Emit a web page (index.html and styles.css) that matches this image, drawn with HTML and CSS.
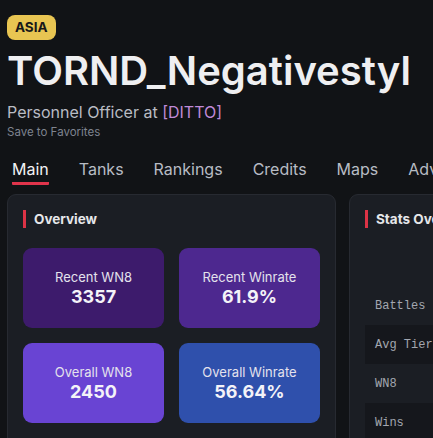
FILE: index.html
```html
<!DOCTYPE html>
<html>
<head>
    <title>TORND_Negativestyl - Player Stats</title>
    <link rel="stylesheet" href="styles.css">
</head>
<body>
    <div class="page">
        <div class="player-head">
            <span class="region">ASIA</span>
            <h1 class="player-name">TORND_Negativestyl</h1>
            <div class="clan-line">Personnel Officer at <a class="clan-tag" href="#">[DITTO]</a></div>
            <a class="fav-link" href="#">Save to Favorites</a>
        </div>

        <nav class="tabs">
            <a class="tab active" href="#">Main</a>
            <a class="tab" href="#">Tanks</a>
            <a class="tab" href="#">Rankings</a>
            <a class="tab" href="#">Credits</a>
            <a class="tab" href="#">Maps</a>
            <a class="tab" href="#">Advanced</a>
        </nav>

        <div class="panels">
            <section class="card">
                <h2 class="card-title">Overview</h2>
                <div class="tiles">
                    <div class="tile tile-recent-wn8">
                        <span class="tile-label">Recent WN8</span>
                        <span class="tile-value">3357</span>
                    </div>
                    <div class="tile tile-recent-wr">
                        <span class="tile-label">Recent Winrate</span>
                        <span class="tile-value">61.9%</span>
                    </div>
                    <div class="tile tile-overall-wn8">
                        <span class="tile-label">Overall WN8</span>
                        <span class="tile-value">2450</span>
                    </div>
                    <div class="tile tile-overall-wr">
                        <span class="tile-label">Overall Winrate</span>
                        <span class="tile-value">56.64%</span>
                    </div>
                </div>
            </section>

            <section class="card">
                <h2 class="card-title">Stats Overview</h2>
                <table class="stats-table">
                    <thead>
                        <tr><th></th><th>Overall</th><th>Recent</th></tr>
                    </thead>
                    <tbody>
                        <tr><td>Battles</td><td>24,118</td><td>1,204</td></tr>
                        <tr><td>Avg Tier</td><td>8.21</td><td>9.34</td></tr>
                        <tr><td>WN8</td><td>2450</td><td>3357</td></tr>
                        <tr><td>Wins</td><td>56.64%</td><td>61.9%</td></tr>
                    </tbody>
                </table>
            </section>
        </div>
    </div>
</body>
</html>
```

FILE: styles.css
```css
html, body { margin: 0; padding: 0; background: #111316; overflow: hidden; }
body { font-family: Inter, "Noto Sans", sans-serif; color: #ececee; }
a { text-decoration: none; }

.page { padding: 15px 7px 0 7px; width: 700px; }

.region { display: inline-block; background: #e8c552; color: #16171a; font-size: 13.5px; font-weight: 700; line-height: 25px; padding: 0 8px; border-radius: 8px; }
.player-name { margin: 6px 0 0 0; font-size: 40px; font-weight: 600; line-height: 50px; color: #efeff1; }
.clan-line { margin-top: 6px; font-size: 16px; line-height: 20px; color: #b9bcc4; }
.clan-tag { color: #c08ad8; }
.fav-link { display: block; margin-top: 2px; font-size: 11.5px; line-height: 16px; color: #7f8490; }

.tabs { display: flex; gap: 30px; padding: 0 5px; margin-top: 18px; white-space: nowrap; }
.tab { font-size: 16px; line-height: 22px; color: #b8bcc4; padding-bottom: 2px; border-bottom: 3px solid transparent; }
.tab.active { color: #f2f2f4; border-bottom-color: #e0344b; border-radius: 1px; }

.panels { display: grid; grid-template-columns: 329px 329px; gap: 13px; margin-top: 9px; }
.card { background: #1b1e24; border: 1px solid #272a31; border-radius: 9px; padding: 15px 15px 10px 15px; }
.card-title { margin: 0; font-size: 13.5px; font-weight: 700; line-height: 18px; color: #e6e7ea; border-left: 3px solid #dc3346; padding-left: 8px; white-space: nowrap; }

.tiles { display: grid; grid-template-columns: 1fr 1fr; gap: 15px; margin-top: 20px; }
.tile { height: 80px; border-radius: 9px; display: flex; flex-direction: column; align-items: center; justify-content: center; }
.tile-label { font-size: 13px; line-height: 17px; color: #e4e2ec; }
.tile-value { font-size: 18px; font-weight: 700; line-height: 22px; color: #f4f3f8; }
.tile-recent-wn8 { background: #3d1b6c; }
.tile-recent-wr { background: #4d288f; }
.tile-overall-wn8 { background: #6944d3; }
.tile-overall-wr { background: #2f50ac; }

.stats-table { width: 100%; margin-top: 19px; border-collapse: collapse; font-family: "Liberation Mono", "DejaVu Sans Mono", monospace; font-size: 12px; color: #a3a7b0; }
.stats-table th, .stats-table td { height: 39px; padding: 0 10px; text-align: left; white-space: nowrap; }
.stats-table th { color: transparent; }
.stats-table tbody tr:nth-child(even) { background: #15171c; }
```
